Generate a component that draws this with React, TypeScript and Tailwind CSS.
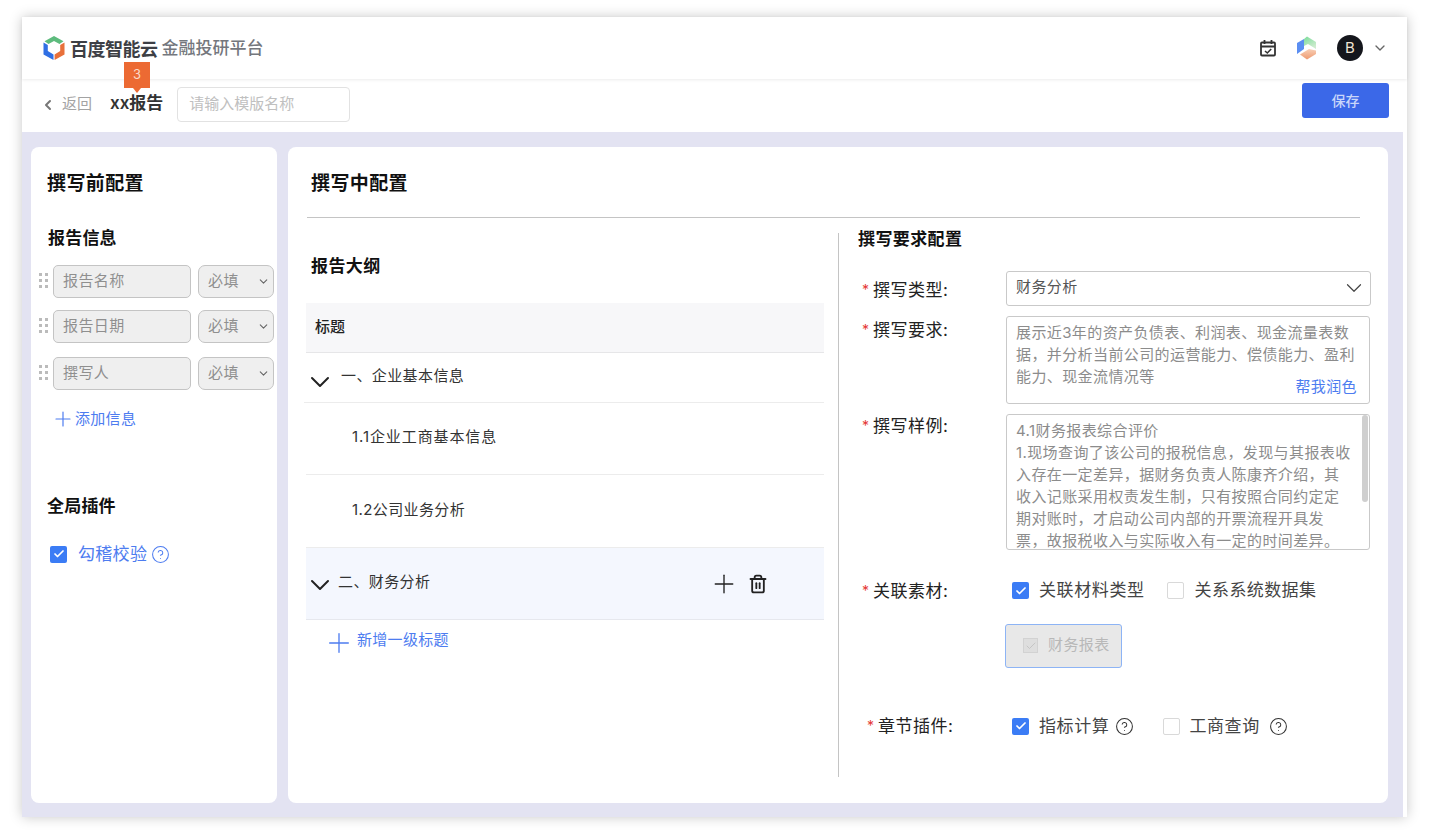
import { ChevronDown, ChevronLeft, Plus, Trash2, Check, CircleHelp } from 'lucide-react';

const font = { fontFamily: 'Inter, "Noto Sans CJK SC", sans-serif' };

function Logo() {
  return (
    <svg width="24" height="26" viewBox="0 0 24 26" fill="none">
      <path d="M12 1 L21.5 6.3 L17.5 9 L12 6 L6.5 9 L2.5 6.3 Z" fill="#5dbb7d" />
      <path d="M1.5 7.5 L5.8 10 L5.8 16 L11.5 19.4 L11.5 25 L1.5 19.5 Z" fill="#2f6fe4" />
      <path d="M22.5 7.5 L18.2 10 L18.2 16 L12.6 19.4 L12.6 25 L22.5 19.5 Z" fill="#e8703a" />
    </svg>
  );
}

function ColorHex() {
  return (
    <svg width="24" height="26" viewBox="0 0 24 26">
      <defs>
        <linearGradient id="hexGreen" x1="0" y1="0" x2="0.6" y2="1">
          <stop offset="0" stopColor="#7bdc9a" />
          <stop offset="1" stopColor="#cfeccf" />
        </linearGradient>
        <linearGradient id="hexOrange" x1="0" y1="0" x2="0" y2="1">
          <stop offset="0" stopColor="#f8cfb6" />
          <stop offset="1" stopColor="#ee9a70" />
        </linearGradient>
      </defs>
      <path d="M3 8 L10 4 L10 14 L3 19 Z" fill="#5b8ef2" />
      <path d="M10 4 L13 1.5 L22 7 L22 14 L14 9 L10 11 Z" fill="url(#hexGreen)" />
      <path d="M6 19.5 L15 14 L22 15.5 L22 19 L13 24.5 Z" fill="url(#hexOrange)" />
    </svg>
  );
}

function Dots() {
  return (
    <div className="grid grid-cols-2 gap-x-[3px] gap-y-[3px] w-[9px] mr-[5px] -mt-[3px]">
      {[0, 1, 2, 3, 4, 5].map(i => (
        <span key={i} className="w-[3px] h-[3px] bg-[#bbbbbb]" />
      ))}
    </div>
  );
}

function InfoRow({ name, className }: { name: string; className?: string }) {
  return (
    <div className={`flex items-center pl-[8px] ${className ?? ''}`}>
      <Dots />
      <div className="w-[138px] h-[33px] rounded-[5px] border border-[#c4c4c4] bg-[#efefef] flex items-center pl-[9px] text-[15px] tracking-[0.4px] text-[#8f8f8f]">
        {name}
      </div>
      <div className="ml-[7px] w-[76px] h-[33px] rounded-[7px] border border-[#c4c4c4] bg-[#efefef] flex items-center justify-between pl-[9px] pr-[3px] text-[15px] tracking-[0.4px] text-[#8f8f8f]">
        必填
        <ChevronDown size={13} className="text-[#666]" />
      </div>
    </div>
  );
}

function Tick({ on }: { on: boolean }) {
  return on ? (
    <span className="w-[17px] h-[17px] rounded-[2px] bg-[#3b7cf5] flex items-center justify-center shrink-0">
      <Check size={12} strokeWidth={3.5} className="text-white" />
    </span>
  ) : (
    <span className="block w-[17px] h-[17px] rounded-[2px] border border-[#d9d9d9] bg-white shrink-0" />
  );
}

function FormLabel({ text, className }: { text: string; className?: string }) {
  return (
    <div className={`flex items-start text-[17px] leading-[22px] text-[#222] tracking-[0.5px] ${className ?? ''}`}>
      <span className="text-[#e53935] text-[14px] w-[11px]">*</span>
      {text}
    </div>
  );
}

const reqLines = [
  '展示近3年的资产负债表、利润表、现金流量表数',
  '据，并分析当前公司的运营能力、偿债能力、盈利',
  '能力、现金流情况等',
];

const sampleLines = [
  '4.1财务报表综合评价',
  '1.现场查询了该公司的报税信息，发现与其报表收',
  '入存在一定差异，据财务负责人陈康齐介绍，其',
  '收入记账采用权责发生制，只有按照合同约定定',
  '期对账时，才启动公司内部的开票流程开具发',
  '票，故报税收入与实际收入有一定的时间差异。',
];

export default function App() {
  return (
    <div style={font} className="w-[1430px] h-[836px] bg-white overflow-hidden pt-[17px] pl-[22px]">
      <div className="relative w-[1385px] h-[800px] bg-white flex flex-col shadow-[0_0_12px_rgba(0,0,0,0.22)]">
        {/* header */}
        <div className="h-[62px] flex items-center justify-between pl-[20px] pr-[19px] shadow-[0_1px_3px_rgba(0,0,0,0.08)]">
          <div className="flex items-center">
            <Logo />
            <span className="ml-[4px] pt-[2px] text-[18px] font-bold text-[#3d3f45] tracking-[-0.5px]">百度智能云</span>
            <span className="ml-[4px] pt-[2px] text-[17px] font-medium text-[#74777d]">金融投研平台</span>
          </div>
          <div className="flex items-center">
            <svg width="18" height="18" viewBox="0 0 18 18" fill="none" stroke="#333" strokeWidth="1.8">
              <rect x="2" y="3.5" width="14" height="13" rx="1" />
              <path d="M2 7.5 H16 M5.5 1 V5 M12.5 1 V5" />
              <path d="M6 12 L8.3 14 L12.2 10" strokeWidth="1.6" />
            </svg>
            <span className="ml-[17px]"><ColorHex /></span>
            <span className="ml-[19px] w-[26px] h-[26px] rounded-full bg-[#14161c] text-[#f1e5d5] text-[15px] flex items-center justify-center">B</span>
            <ChevronDown size={16} className="ml-[9px] text-[#666]" />
          </div>
        </div>

        {/* toolbar */}
        <div className="h-[53px] flex items-center pl-[18px] pr-[18px]">
          <ChevronLeft size={16} strokeWidth={3} className="text-[#777] -mt-[2px]" />
          <span className="ml-[6px] -mt-[3px] text-[15px] text-[#a3a3a3]">返回</span>
          <span className="ml-[18px] -mt-[3px] text-[17px] font-semibold text-[#333]">xx报告</span>
          <div className="ml-[14px] -mt-[3px] w-[173px] h-[35px] border border-[#e2e2e2] rounded-[4px] flex items-center pl-[11px] text-[15px] text-[#c0c0c0]">
            请输入模版名称
          </div>
          <button className="ml-auto -mt-[11px] w-[87px] h-[35px] rounded-[3px] bg-[#3b68e8] text-[#c9d6fa] text-[14px] font-medium">
            保存
          </button>
        </div>

        {/* step badge */}
        <div className="absolute left-[102px] top-[45px] w-[26px] h-[26px] bg-[#ec6a33] text-[#fbd9c8] text-[13px] flex items-center justify-center">
          3
          <span className="absolute left-[9px] top-[26px] border-x-[4px] border-x-transparent border-t-[5px] border-t-[#ec6a33]" />
        </div>

        {/* body */}
        <div className="flex-1 mr-[4px] bg-[#e3e3f2] flex gap-[11px] pl-[9px] pt-[15px] pb-[14px] pr-[15px]">
          {/* left card */}
          <div className="w-[246px] bg-white rounded-[8px] flex flex-col">
            <div className="mt-[25px] ml-[16px] text-[19px] tracking-[0.4px] leading-[24px] font-semibold text-[#111]">撰写前配置</div>
            <div className="mt-[30px] ml-[17px] text-[17px] tracking-[0.2px] leading-[24px] font-semibold text-[#111]">报告信息</div>
            <InfoRow name="报告名称" className="mt-[15px]" />
            <InfoRow name="报告日期" className="mt-[12px]" />
            <InfoRow name="撰写人" className="mt-[14px]" />
            <div className="mt-[16px] ml-[20px] flex items-center text-[15px] tracking-[0.3px] leading-[22px] text-[#4d7cf0]">
              <Plus size={24} strokeWidth={1.2} className="mt-[1px]" />
              <span>添加信息</span>
            </div>
            <div className="mt-[63px] ml-[16px] text-[17px] tracking-[0.2px] leading-[24px] font-semibold text-[#111]">全局插件</div>
            <div className="mt-[24px] ml-[19px] flex items-center text-[17px] tracking-[0.3px] leading-[24px] text-[#4d7cf0]">
              <Tick on />
              <span className="ml-[11px]">勾稽校验</span>
              <CircleHelp size={19} strokeWidth={1.3} className="ml-[4px]" />
            </div>
          </div>

          {/* main card */}
          <div className="flex-1 bg-white rounded-[8px] flex flex-col">
            <div className="mt-[25px] ml-[23px] text-[19px] tracking-[0.4px] leading-[24px] font-semibold text-[#111]">撰写中配置</div>
            <div className="mt-[21px] ml-[19px] mr-[28px] h-px bg-[#c4c4c4]" />
            <div className="flex mt-[15px] ml-[18px]">
              {/* outline */}
              <div className="w-[518px] pt-[21px]">
                <div className="ml-[5px] text-[17px] tracking-[0.4px] leading-[24px] font-semibold text-[#111]">报告大纲</div>
                <div className="mt-[25px] h-[50px] bg-[#f7f7f9] border-b border-[#e6e6e8] flex items-center pl-[9px] pb-[1px] text-[15px] font-medium text-[#222]">标题</div>
                <div className="h-[50px] border-b border-[#ececec] flex items-center -ml-[2px] text-[15px] tracking-[0.4px] text-[#333]">
                  <ChevronDown size={32} strokeWidth={1.5} className="text-[#222] mt-[8px] -mr-[1px]" />
                  <span className="ml-[6px] pb-[2px]">一、企业基本信息</span>
                </div>
                <div className="h-[72px] border-b border-[#ececec] flex items-center pl-[46px] pb-[3px] text-[15px] tracking-[0.9px] text-[#333]">1.1企业工商基本信息</div>
                <div className="h-[73px] border-b border-[#ececec] flex items-center pl-[46px] pb-[2px] text-[15px] tracking-[0.4px] text-[#333]">1.2公司业务分析</div>
                <div className="h-[72px] bg-[#f4f7fe] border-b border-[#e6e8ee] flex items-center text-[15px] tracking-[0.4px] text-[#333]">
                  <ChevronDown size={32} strokeWidth={1.5} className="text-[#222] -ml-[2px] mt-[2px]" />
                  <span className="ml-[2px] pb-[3px]">二、财务分析</span>
                  <span className="ml-auto mr-[56px] flex items-center gap-[9px]">
                    <Plus size={30} strokeWidth={1.1} className="text-[#222]" />
                    <Trash2 size={20} strokeWidth={2.2} className="text-[#222]" />
                  </span>
                </div>
                <div className="mt-[1px] ml-[17px] flex items-center text-[15px] tracking-[0.3px] leading-[22px] text-[#4d7cf0]">
                  <Plus size={32} strokeWidth={1} className="mt-[6px]" />
                  <span className="ml-[2px]">新增一级标题</span>
                </div>
              </div>

              {/* vertical divider */}
              <div className="ml-[14px] w-px h-[544px] bg-[#c4c4c4]" />

              {/* requirements form */}
              <div className="ml-[19px] flex-1">
                <div className="-mt-[1px] text-[17px] tracking-[0.4px] leading-[14px] font-semibold text-[#111]">撰写要求配置</div>
                <div className="mt-[25px] flex">
                  <FormLabel text="撰写类型:" className="w-[148px] pl-[4px] pt-[8px]" />
                  <div className="w-[365px] h-[35px] rounded-[3px] border border-[#c9c9c9] flex items-center justify-between pl-[9px] pr-[3px] pb-[2px] text-[15px] tracking-[0.4px] text-[#555]">
                    财务分析
                    <ChevronDown size={26} strokeWidth={1.1} className="text-[#444]" />
                  </div>
                </div>
                <div className="mt-[10px] flex">
                  <FormLabel text="撰写要求:" className="w-[148px] pl-[4px] pt-[3px]" />
                  <div className="relative w-[364px] h-[88px] rounded-[3px] border border-[#c9c9c9] pt-[5px] pl-[9px] text-[15px] tracking-[0.4px] leading-[22px] text-[#8c8c8c] whitespace-nowrap">
                    {reqLines.map(l => <div key={l}>{l}</div>)}
                    <span className="absolute right-[12px] bottom-[5px] text-[#4d7cf0]">帮我润色</span>
                  </div>
                </div>
                <div className="mt-[10px] flex">
                  <FormLabel text="撰写样例:" className="w-[148px] pl-[4px] pt-[1px]" />
                  <div className="relative w-[364px] h-[136px] rounded-[3px] border border-[#c9c9c9] overflow-hidden pt-[5px] pl-[9px] text-[15px] tracking-[0.4px] leading-[22px] text-[#8c8c8c] whitespace-nowrap">
                    {sampleLines.map(l => <div key={l}>{l}</div>)}
                    <span className="absolute right-[1px] top-0 w-[6px] h-[87px] rounded-[3px] bg-[#cfcfcf]" />
                  </div>
                </div>
                <div className="mt-[28px] flex items-center">
                  <FormLabel text="关联素材:" className="w-[154px] pl-[4px]" />
                  <Tick on />
                  <span className="ml-[10px] text-[17px] tracking-[0.6px] text-[#444]">关联材料类型</span>
                  <span className="ml-[22px]"><Tick on={false} /></span>
                  <span className="ml-[11px] text-[17px] tracking-[0.4px] text-[#444]">关系系统数据集</span>
                </div>
                <div className="mt-[20px] ml-[147px] w-[117px] h-[44px] rounded-[3px] border border-[#8db4f5] bg-[#e8e8e8] flex items-center pl-[17px] text-[15px] tracking-[0.4px] text-[#b8b8b8]">
                  <span className="w-[15px] h-[15px] border border-[#d2d2d2] bg-[#dedede] flex items-center justify-center">
                    <Check size={12} strokeWidth={1.5} className="text-[#bcbcbc]" />
                  </span>
                  <span className="ml-[10px]">财务报表</span>
                </div>
                <div className="mt-[46px] flex items-center">
                  <FormLabel text="章节插件:" className="w-[154px] pl-[9px]" />
                  <Tick on />
                  <span className="ml-[10px] text-[17px] tracking-[0.6px] text-[#444]">指标计算</span>
                  <CircleHelp size={19} strokeWidth={1.3} className="ml-[6px] text-[#333]" />
                  <span className="ml-[29px]"><Tick on={false} /></span>
                  <span className="ml-[9px] text-[17px] tracking-[0.6px] text-[#444]">工商查询</span>
                  <CircleHelp size={19} strokeWidth={1.3} className="ml-[9px] text-[#333]" />
                </div>
              </div>
            </div>
          </div>
        </div>
      </div>
    </div>
  );
}
